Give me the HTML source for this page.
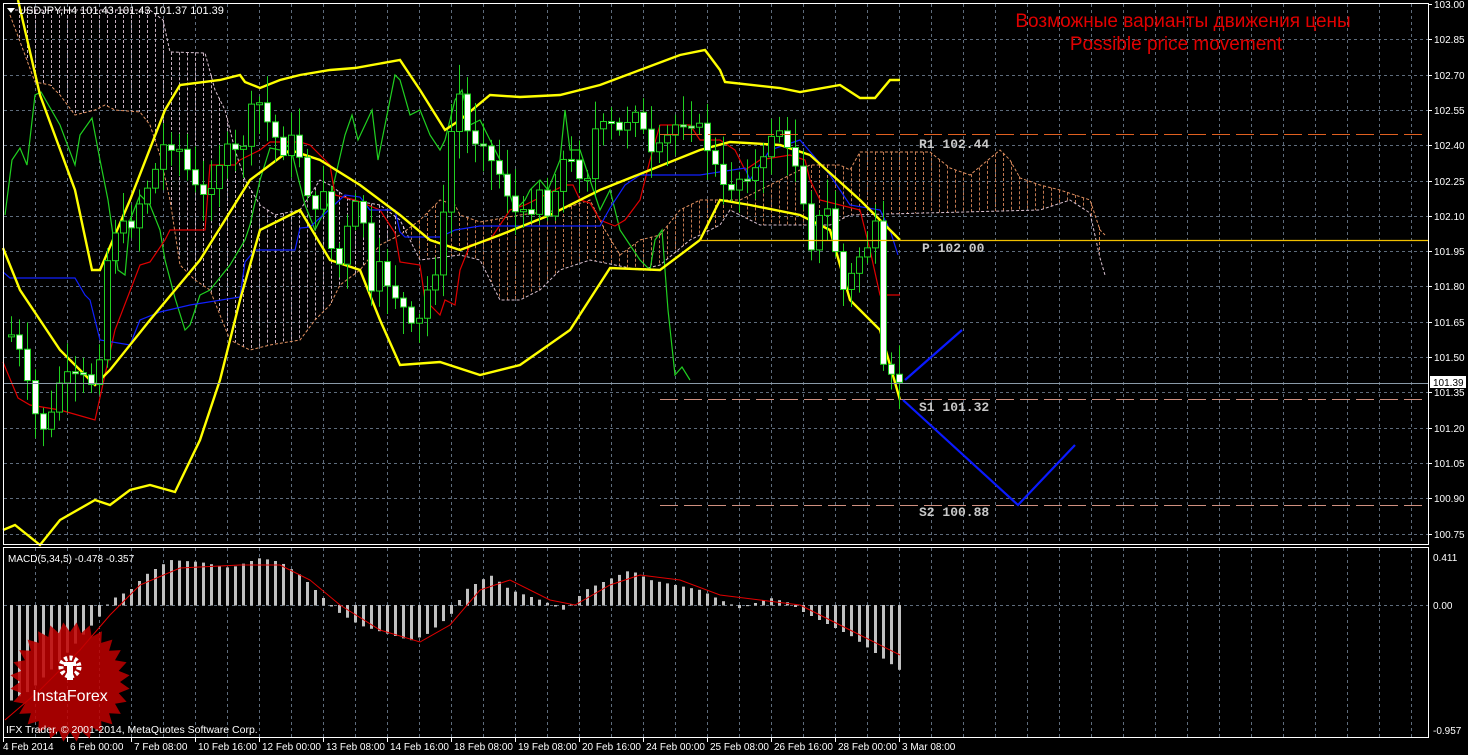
<!DOCTYPE html>
<html><head><meta charset="utf-8"><style>
html,body{margin:0;padding:0;background:#000;width:1468px;height:755px;overflow:hidden}
svg{display:block}
text{font-family:"Liberation Sans",sans-serif}
text.mono{font-family:"Liberation Mono",monospace}
</style></head><body>
<svg id="s" width="1468" height="755" xmlns="http://www.w3.org/2000/svg">
<rect width="1468" height="755" fill="#000"/>
<g id="grid"></g>
<g id="cloud"></g>
<g id="lines"></g>
<g id="candles"></g>
<g id="macd"></g>
<rect x="3.5" y="3.5" width="1425" height="541" fill="none" stroke="#fff" stroke-width="1"/>
<rect x="3.5" y="547.5" width="1425" height="190" fill="none" stroke="#fff" stroke-width="1"/>
<line x1="660" y1="134.5" x2="1428" y2="134.5" stroke="#e06020" stroke-dasharray="18,6"/>
<line x1="700" y1="240.5" x2="1428" y2="240.5" stroke="#f0c000" stroke-width="1.3"/>
<line x1="660" y1="399.5" x2="1428" y2="399.5" stroke="#d09080" stroke-dasharray="18,6"/>
<line x1="660" y1="505.5" x2="1428" y2="505.5" stroke="#d09080" stroke-dasharray="18,6"/>
<line x1="4" y1="383.5" x2="1428" y2="383.5" stroke="#8a9aa8"/>
<g font-size="13" font-weight="bold" fill="#c8c8c8">
<text class="mono" x="919" y="148">R1 102.44</text>
<text class="mono" x="922" y="252">P 102.00</text>
<text class="mono" x="919" y="411">S1 101.32</text>
<text class="mono" x="919" y="516">S2 100.88</text>
</g>
<polyline points="905,380 962,330" fill="none" stroke="#0a1aff" stroke-width="2.2"/>
<polyline points="903,400 1018,505 1075,445" fill="none" stroke="#0a1aff" stroke-width="2.2"/>
<text x="1183" y="27" text-anchor="middle" font-size="19" fill="#e00000">Возможные варианты движения цены</text>
<text x="1176" y="50" text-anchor="middle" font-size="19" fill="#e00000">Possible price movement</text>
<polygon points="7,8 15,8 11,13" fill="#fff"/>
<text x="18" y="14" font-size="11" fill="#fff">USDJPY,H4  101.43 101.43 101.37 101.39</text>
<text x="8" y="562" font-size="10" fill="#fff">MACD(5,34,5) -0.478 -0.357</text>
<g id="axis" font-size="10" fill="#fff"></g>
<rect x="1430" y="376" width="36" height="12" fill="#fff"/>
<text x="1433" y="386" font-size="10" fill="#000">101.39</text>
<g id="time" font-size="10" fill="#fff"></g>
<g opacity="0.85">
<polygon id="star" fill="#c00000"/>
</g>
<g fill="#fff">
<circle cx="70" cy="667" r="9" fill="none" stroke="#fff" stroke-width="5" stroke-dasharray="3,2.2"/>
<rect x="67" y="664" width="6" height="16"/>
<rect x="64" y="662" width="12" height="4"/>
</g>
<text x="70" y="701" text-anchor="middle" font-size="16" fill="#fff">InstaForex</text>
<text x="6" y="733" font-size="10.5" fill="#fff">IFX Trader, © 2001-2014, MetaQuotes Software Corp.</text>
</svg>
<script>
const NS="http://www.w3.org/2000/svg";
function el(p,t,a){const e=document.createElementNS(NS,t);for(const k in a)e.setAttribute(k,a[k]);p.appendChild(e);return e;}
function interp(P,x){if(x<=P[0][0])return P[0][1];for(let i=1;i<P.length;i++){if(x<=P[i][0]){const a=P[i-1],b=P[i];return a[1]+(b[1]-a[1])*(x-a[0])/(b[0]-a[0]);}}return P[P.length-1][1];}
function pl(g,P,c,w,d){const a={points:P.map(p=>p.join(',')).join(' '),fill:'none',stroke:c,'stroke-width':w};if(d)a['stroke-dasharray']=d;el(g,'polyline',a);}
const G=document.getElementById('grid');
for(let x=35;x<1428;x+=32){el(G,'line',{x1:x+.5,y1:4,x2:x+.5,y2:544,stroke:'#5e6c7c','stroke-dasharray':'3,3'});el(G,'line',{x1:x+.5,y1:548,x2:x+.5,y2:737,stroke:'#5e6c7c','stroke-dasharray':'3,3'});}
const ax=document.getElementById('axis');
const labs=["103.00","102.85","102.70","102.55","102.40","102.25","102.10","101.95","101.80","101.65","101.50","101.35","101.20","101.05","100.90","100.75"];
labs.forEach((l,k)=>{const y=Math.round(4+k*35.3);if(k>0)el(G,'line',{x1:4,y1:y+.5,x2:1428,y2:y+.5,stroke:'#5e6c7c','stroke-dasharray':'3,3'});el(ax,'line',{x1:1428,y1:y+.5,x2:1432,y2:y+.5,stroke:'#fff'});el(ax,'text',{x:1434,y:y+4}).textContent=l;});
el(G,'line',{x1:4,y1:605.5,x2:1428,y2:605.5,stroke:'#5e6c7c','stroke-dasharray':'3,3'});
[["0.411",561],["0.00",609],["-0.957",734]].forEach(a=>{el(ax,'text',{x:1433,y:a[1]}).textContent=a[0];});
const T=document.getElementById('time');
const tl=["4 Feb 2014","6 Feb 00:00","7 Feb 08:00","10 Feb 16:00","12 Feb 00:00","13 Feb 08:00","14 Feb 16:00","18 Feb 08:00","19 Feb 08:00","20 Feb 16:00","24 Feb 00:00","25 Feb 08:00","26 Feb 16:00","28 Feb 00:00","3 Mar 08:00"];
tl.forEach((l,k)=>{const x=3+64*k;el(T,'line',{x1:x+.5,y1:738,x2:x+.5,y2:742,stroke:'#fff'});el(T,'text',{x:x+(k?3:0),y:750}).textContent=l;});
const A=[[10,15],[25,55],[35,82],[50,85],[60,95],[75,115],[95,110],[105,105],[115,110],[140,112],[150,125],[160,155],[170,200],[180,265],[195,280],[210,290],[230,340],[250,350],[270,345],[300,340],[315,320],[330,305],[340,285],[360,270],[380,245],[400,235],[420,220],[440,200],[455,205],[460,215],[480,222],[520,215],[560,210],[590,200],[605,230],[620,255],[640,240],[660,235],[680,210],[700,200],[740,200],[790,175],[810,165],[840,165],[850,170],[860,152],[930,152],[950,168],[970,175],[1000,150],[1010,160],[1020,178],[1040,185],[1060,190],[1090,200],[1100,230],[1105,235]];
const B=[[10,10],[150,10],[163,20],[170,52],[205,53],[215,90],[225,110],[235,150],[245,180],[260,205],[275,215],[300,210],[320,180],[330,185],[350,200],[380,205],[400,220],[420,260],[460,255],[480,260],[500,300],[520,300],[540,290],[560,270],[590,260],[640,270],[660,265],[690,240],[720,225],[730,210],[760,225],[830,225],[850,215],[1040,210],[1070,200],[1090,213],[1100,258],[1105,275]];
const C=document.getElementById('cloud');
for(let x=19;x<=1105;x+=8){const a=interp(A,x),b=interp(B,x);const col=a<b?'#c07850':'#c8b0c0';el(C,'line',{x1:x+.5,y1:Math.min(a,b),x2:x+.5,y2:Math.max(a,b),stroke:col,'stroke-dasharray':'3,2'});}
pl(C,A,'#e09060',1,'3,2');pl(C,B,'#d8c0d0',1,'3,2');
const L=document.getElementById('lines');
pl(L,[[5,215],[12,160],[20,148],[27,165],[35,95],[41,92],[60,125],[75,165],[80,135],[92,118],[100,160],[108,200],[118,270],[125,275],[130,220],[140,195],[150,205],[160,230],[165,260],[175,298],[185,330],[190,325],[200,295],[210,290],[230,265],[245,240],[250,225],[260,180],[270,148],[280,150],[290,145],[305,205],[315,230],[330,200],[345,135],[352,115],[358,140],[372,110],[378,160],[395,75],[400,80],[410,115],[420,110],[430,135],[440,150],[445,140],[455,100],[462,90],[470,125],[480,120],[490,140],[500,160],[505,180],[515,210],[525,200],[530,190],[540,180],[548,190],[560,160],[565,110],[570,150],[580,150],[590,180],[600,210],[610,190],[620,230],[630,245],[640,260],[650,270],[655,240],[662,230],[668,310],[675,375],[682,367],[690,380]],'#20d020',1.2);
pl(L,[[3,362],[18,398],[30,405],[60,410],[95,420],[115,330],[140,265],[150,262],[165,240],[170,230],[205,230],[210,165],[235,165],[240,160],[260,150],[270,142],[300,142],[310,145],[330,165],[335,195],[355,200],[380,210],[395,233],[400,262],[420,265],[425,300],[440,315],[445,300],[455,305],[460,270],[470,245],[490,240],[500,225],[510,210],[525,205],[565,185],[573,185],[580,200],[590,203],[600,220],[615,226],[625,220],[640,200],[650,160],[660,125],[690,125],[700,140],[720,140],[735,150],[745,170],[760,160],[790,155],[805,160],[810,180],[820,200],[860,210],[870,250],[880,295],[900,295]],'#e00000',1.2);
pl(L,[[3,272],[10,278],[75,278],[85,295],[90,300],[100,340],[130,345],[140,320],[160,312],[190,305],[240,297],[245,262],[255,250],[295,250],[300,228],[310,227],[345,195],[360,197],[370,210],[395,210],[400,232],[405,237],[440,237],[455,230],[480,226],[600,226],[610,208],[625,185],[640,175],[700,175],[745,168],[750,180],[770,150],[800,140],[830,175],[850,205],[880,210],[890,230],[898,255]],'#1020ff',1.2);
const Y='#ffff00';
pl(L,[[18,0],[40,95],[75,190],[92,270],[100,270],[130,200],[165,110],[180,85],[220,80],[240,75],[245,82],[260,88],[280,80],[300,75],[330,70],[355,68],[400,60],[420,90],[445,130],[460,120],[490,95],[520,97],[560,95],[600,85],[640,70],[680,55],[705,50],[720,70],[725,82],[780,88],[800,92],[840,85],[860,98],[875,98],[890,80],[900,80]],Y,2.4);
pl(L,[[3,248],[20,290],[40,320],[60,350],[95,385],[110,370],[150,320],[200,260],[250,180],[290,150],[320,160],[360,185],[400,215],[430,240],[460,250],[500,235],[550,215],[600,190],[650,170],[700,150],[730,142],[780,145],[810,155],[860,200],[900,240]],Y,2.4);
pl(L,[[3,530],[15,525],[40,545],[60,520],[95,500],[110,505],[130,490],[150,485],[175,492],[200,440],[220,380],[240,300],[260,230],[300,210],[330,260],[360,270],[380,320],[400,365],[440,362],[480,375],[520,365],[570,330],[610,268],[660,270],[700,240],[720,200],[750,205],[800,215],[830,230],[850,300],[880,330],[900,400]],Y,2.4);
const CP=[[11,335],[20,355],[30,400],[40,430],[50,420],[60,378],[75,378],[90,380],[97,395],[102,290],[112,230],[130,225],[140,200],[155,170],[165,140],[180,150],[192,185],[205,200],[215,170],[225,150],[240,155],[255,95],[262,110],[270,130],[283,150],[295,135],[305,185],[315,215],[325,180],[332,260],[340,265],[352,205],[362,210],[370,300],[380,265],[390,290],[400,300],[410,330],[420,320],[432,270],[440,268],[447,150],[460,90],[470,150],[480,130],[490,160],[500,175],[508,195],[518,220],[530,210],[540,185],[548,220],[560,160],[575,165],[585,185],[595,130],[610,125],[622,135],[633,100],[642,130],[652,160],[662,145],[675,125],[688,118],[700,130],[708,150],[718,175],[725,195],[735,180],[745,175],[755,170],[765,160],[775,115],[782,140],[790,160],[800,165],[808,255],[818,220],[828,210],[835,250],[845,300],[855,260],[865,250],[875,228],[882,370],[890,380],[899,380]];
const K=document.getElementById('candles');
let prev=interp(CP,3);let seed=7;function rnd(){seed=(seed*9301+49297)%233280;return seed/233280;}
for(let i=0;i<112;i++){const x=11+8*i;let c=interp(CP,x)+(rnd()-.5)*14;const o=prev;const hi=Math.min(o,c)-4-rnd()*26,lo=Math.max(o,c)+4+rnd()*26;
el(K,'line',{x1:x+.5,y1:hi,x2:x+.5,y2:lo,stroke:'#20d020'});
const t=Math.min(o,c),h=Math.max(2,Math.abs(o-c));
el(K,'rect',{x:x-2.5,y:t,width:6,height:h,fill:c>o?'#fff':'#000',stroke:'#20d020','stroke-width':1});prev=c;}
const M=document.getElementById('macd');
const MP=[[11,700],[30,690],[60,660],[100,615],[110,600],[130,590],[145,575],[170,560],[200,562],[230,568],[260,558],[280,562],[300,575],[320,595],[335,610],[360,625],[410,640],[425,635],[450,615],[465,590],[490,575],[510,590],[540,600],[565,610],[585,590],[630,570],[650,580],[700,590],[720,600],[740,608],[770,598],[790,603],[800,610],[850,635],[900,670]];
for(let i=0;i<112;i++){const x=11+8*i;const v=interp(MP,x);el(M,'rect',{x:x-1,y:Math.min(v,605),width:3,height:Math.abs(v-605)+.5,fill:'#c0c0c0'});}
const SP=[[5,720],[40,690],[80,650],[110,615],[140,585],[180,568],[240,565],[280,565],[310,580],[340,605],[380,630],[420,642],[450,625],[480,590],[510,580],[550,600],[575,605],[610,585],[640,575],[680,580],[720,595],[760,600],[800,605],[850,630],[900,655]];
pl(M,SP,'#e00000',1);
let pts=[];for(let k=0;k<56;k++){const r=k%2?60:50;const a=k*Math.PI/28;pts.push((70+r*Math.cos(a)).toFixed(1)+','+(682+r*Math.sin(a)).toFixed(1));}
document.getElementById('star').setAttribute('points',pts.join(' '));
</script>
</body></html>
